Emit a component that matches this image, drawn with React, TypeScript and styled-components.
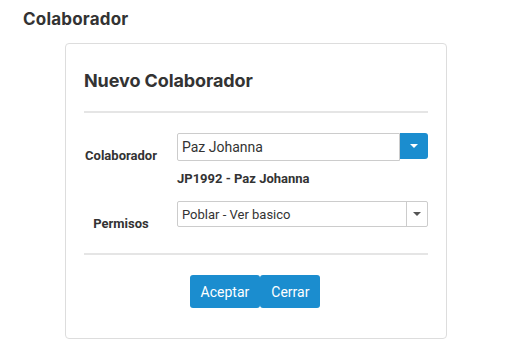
import React from "react";
import styled, { createGlobalStyle } from "styled-components";

const Global = createGlobalStyle`
  html, body { margin: 0; padding: 0; background: #fff; }
  body { font-family: Roboto, "Liberation Sans", sans-serif; color: #333; }
  * { box-sizing: border-box; }
`;

const Page = styled.div`
  padding: 9px 0 0 23px;
`;

const PageTitle = styled.h1`
  margin: 0;
  font-family: Inter, "Liberation Sans", sans-serif;
  font-size: 17px;
  font-weight: 700;
  line-height: 20px;
  letter-spacing: 0.2px;
  color: #333;
`;

const Card = styled.div`
  margin: 14px 0 0 42px;
  width: 382px;
  height: 296px;
  border: 1px solid #ddd;
  border-radius: 4px;
  padding: 26px 18px 0 18px;
`;

const CardTitle = styled.h2`
  margin: 0;
  font-family: Inter, "Liberation Sans", sans-serif;
  font-size: 18px;
  font-weight: 700;
  line-height: 22px;
  letter-spacing: -0.1px;
  color: #333;
`;

const Divider = styled.div<{ $top: number }>`
  height: 2px;
  background: #e5e5e5;
  margin-top: ${(p) => p.$top}px;
`;

const Form = styled.div`
  display: grid;
  grid-template-columns: 74px 1fr;
  column-gap: 19px;
  row-gap: 15px;
  margin-top: 20px;
`;

const Label = styled.label<{ $top: number }>`
  font-size: 13px;
  font-weight: 700;
  text-align: center;
  white-space: nowrap;
  padding-top: ${(p) => p.$top}px;
`;

const Field = styled.div`
  display: flex;
  flex-direction: column;
`;

const InputGroup = styled.div`
  display: flex;
  height: 28px;
`;

const TextInput = styled.div`
  flex: 1;
  border: 1px solid #ccc;
  border-radius: 2px 0 0 2px;
  padding: 0 4px;
  display: flex;
  align-items: center;
  font-size: 14px;
  color: #333;
`;

const DropButton = styled.div`
  width: 28px;
  height: 26px;
  background: #1b8dcf;
  border-radius: 0 3px 3px 0;
  display: flex;
  align-items: center;
  justify-content: center;
`;

const Caret = styled.span<{ $color: string }>`
  width: 0;
  height: 0;
  border-left: 4px solid transparent;
  border-right: 4px solid transparent;
  border-top: 4px solid ${(p) => p.$color};
`;

const Info = styled.div`
  margin-top: 10px;
  font-size: 13px;
  font-weight: 700;
  color: #333;
`;

const Select = styled.div`
  display: flex;
  height: 26px;
  border: 1px solid #ccc;
  border-radius: 2px;
`;

const SelectText = styled.div`
  flex: 1;
  display: flex;
  align-items: center;
  padding: 0 4px;
  font-size: 13px;
  color: #333;
`;

const SelectArrow = styled.div`
  width: 21px;
  border-left: 1px solid #ccc;
  display: flex;
  align-items: center;
  justify-content: center;
`;

const Actions = styled.div`
  display: flex;
  justify-content: center;
  margin-top: 20px;
  margin-left: -2px;
`;

const Button = styled.button`
  height: 33px;
  border: none;
  background: #1b8dcf;
  color: #fff;
  font-family: Roboto, "Liberation Sans", sans-serif;
  font-size: 14px;
  padding: 0 11px;
  border-radius: 3px;
`;

export default function App() {
  return (
    <>
      <Global />
      <Page>
        <PageTitle>Colaborador</PageTitle>
        <Card>
          <CardTitle>Nuevo Colaborador</CardTitle>
          <Divider $top={19} />
          <Form>
            <Label $top={15}>Colaborador</Label>
            <Field>
              <InputGroup>
                <TextInput>Paz Johanna</TextInput>
                <DropButton>
                  <Caret $color="#fff" />
                </DropButton>
              </InputGroup>
              <Info>JP1992 - Paz Johanna</Info>
            </Field>
            <Label $top={15}>Permisos</Label>
            <Select>
              <SelectText>Poblar - Ver basico</SelectText>
              <SelectArrow>
                <Caret $color="#555" />
              </SelectArrow>
            </Select>
          </Form>
          <Divider $top={22} />
          <Actions>
            <Button>Aceptar</Button>
            <Button>Cerrar</Button>
          </Actions>
        </Card>
      </Page>
    </>
  );
}
